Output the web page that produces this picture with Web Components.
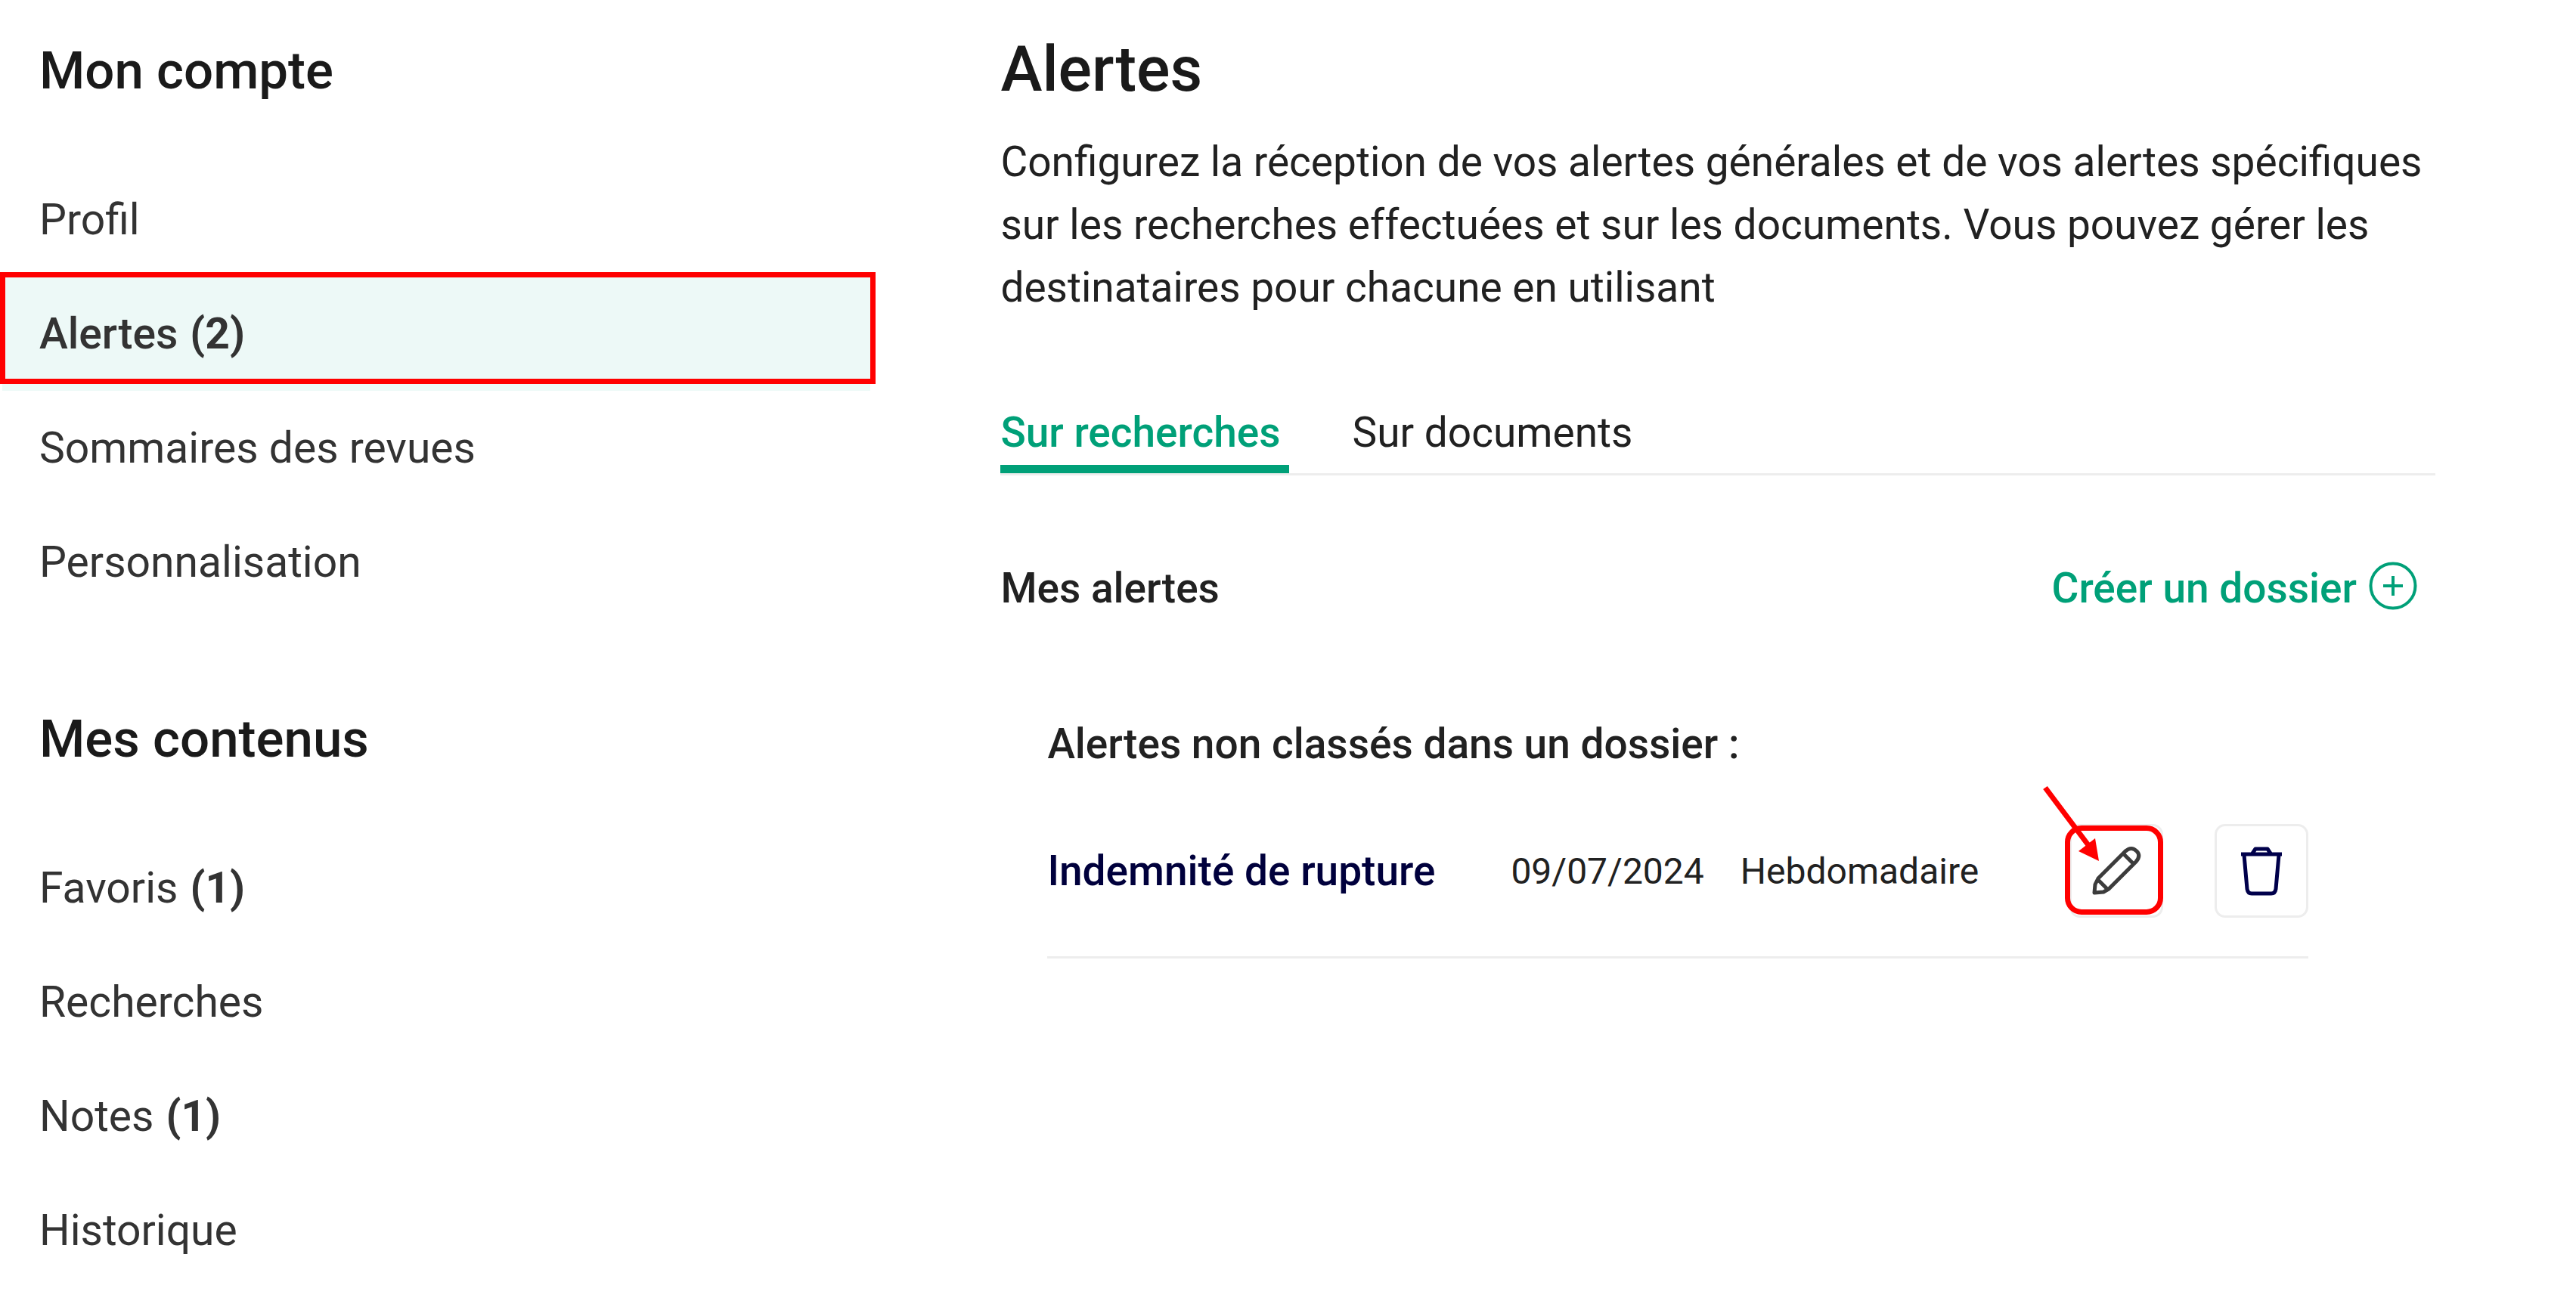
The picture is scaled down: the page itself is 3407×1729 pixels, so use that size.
<!DOCTYPE html>
<html lang="fr">
<head>
<meta charset="utf-8">
<title>Mon compte – Alertes</title>
<style>
  body { margin: 0; background: #fff; font-family: Roboto, "Liberation Sans", sans-serif; font-size: 55px; line-height: 83px; color: #212121; }
</style>
</head>
<body>
<account-page></account-page>
<script>
const define = (name, html, setup) => {
  const tpl = document.createElement('template');
  tpl.innerHTML = html;
  customElements.define(name, class extends HTMLElement {
    connectedCallback() {
      if (this.shadowRoot) return;
      this.attachShadow({ mode: 'open' }).append(tpl.content.cloneNode(true));
      if (setup) setup(this, this.shadowRoot);
    }
  });
};

define('call-out', `
  <style>
    :host { position: absolute; box-sizing: border-box; border: 7px solid #f00; pointer-events: none; }
  </style>`);

define('call-out-arrow', `
  <style>
    :host { position: absolute; width: 80px; height: 104px; pointer-events: none; }
    svg { display: block; width: 100%; height: 100%; }
  </style>
  <svg viewBox="0 0 80 104" aria-hidden="true">
    <path d="M5 3 62 79" stroke="#f00" stroke-width="7" fill="none"/>
    <path d="M76 100 49 87 71 70z" fill="#f00"/>
  </svg>`);

define('nav-item', `
  <style>
    :host { display: block; position: relative; margin: 0 7px 0 3px; }
    a { display: flex; gap: 16px; align-items: center; height: 151px; box-sizing: border-box; padding: 0 49px; font-size: 57px; color: #333; text-decoration: none; }
    b { font-weight: 700; }
    b:empty { display: none; }
    :host([active]) a { background: #edf9f7; font-weight: 500; }
  </style>
  <a href="#"><span><slot></slot></span><b></b></a>
  <slot name="mark"></slot>`,
  (host, root) => {
    const n = host.getAttribute('count');
    if (n) root.querySelector('b').textContent = '(' + n + ')';
    if (host.hasAttribute('active')) root.querySelector('a').setAttribute('aria-current', 'page');
  });

define('nav-section', `
  <style>
    :host { display: block; }
    h2 { margin: 0; padding: 52px 52px 80px; font-size: 69px; line-height: 83px; font-weight: 500; color: #1a1a1a; }
    nav { padding-bottom: 65px; }
  </style>
  <h2></h2>
  <nav><slot></slot></nav>`,
  (host, root) => {
    const heading = host.getAttribute('heading');
    root.querySelector('h2').textContent = heading;
    root.querySelector('nav').setAttribute('aria-label', heading);
  });

define('alert-tabs', `
  <style>
    :host { display: flex; gap: 83px; border-bottom: 3px solid #ededed; }
    button { all: unset; cursor: pointer; font: inherit; height: 97px; box-sizing: border-box; white-space: nowrap; border-bottom: 11px solid transparent; }
    button[aria-selected=true] { color: #00a078; font-weight: 500; border-bottom-color: #00a078; padding-right: 12px; }
  </style>
  <button role="tab" aria-selected="true">Sur recherches</button>
  <button role="tab" aria-selected="false">Sur documents</button>`,
  (host) => host.setAttribute('role', 'tablist'));

define('icon-button', `
  <style>
    :host { display: block; position: relative; }
    button { display: flex; align-items: center; justify-content: center; width: 124px; height: 124px; padding: 0; background: #fff; border: 3px solid #ededed; border-radius: 14px; color: inherit; }
  </style>
  <button type="button"><slot></slot></button>
  <slot name="mark"></slot>`,
  (host, root) => root.querySelector('button').setAttribute('aria-label', host.getAttribute('label')));

define('alert-row', `
  <style>
    :host { display: flex; align-items: center; border-bottom: 3px solid #ededed; padding-bottom: 51px; }
    a { color: #00003c; font-weight: 500; text-decoration: none; white-space: nowrap; }
    .meta { display: flex; gap: 48px; margin-left: 100px; font-size: 48px; }
    .actions { display: flex; gap: 68px; margin-left: auto; }
    svg { display: block; width: 68px; height: 68px; fill: none; stroke: currentColor; stroke-width: 5; stroke-linejoin: round; }
    .edit { color: #3c3c3c; }
    .del { color: #00004b; }
    call-out { left: -6px; top: 2px; width: 130px; height: 118px; border-radius: 22px; }
    call-out-arrow { left: -37px; top: -51px; }
  </style>
  <a href="#"><slot></slot></a>
  <div class="meta"><slot name="date"></slot><slot name="frequency"></slot></div>
  <div class="actions">
    <icon-button class="edit" label="Modifier">
      <svg viewBox="0 0 68 68"><path d="M5 63 6 52 10 44 46 8Q54 1 61 8 67 14 60 22L24 58 17 62zM43 11 56 24M10 46 22 58"/></svg>
      <call-out slot="mark"></call-out>
      <call-out-arrow slot="mark"></call-out-arrow>
    </icon-button>
    <icon-button class="del" label="Supprimer">
      <svg viewBox="0 0 68 68"><path d="M7 12H61M11 13 15 58Q16 64 21 64H47Q52 64 53 58L57 13M22 11 26 5H42L46 11"/></svg>
    </icon-button>
  </div>`);

define('alert-panel', `
  <style>
    :host { display: block; }
    h1 { margin: 0; font-size: 83px; line-height: 96px; font-weight: 500; color: #1a1a1a; }
    p { margin: 33px 0 107px; }
    .bar { display: flex; justify-content: space-between; align-items: center; margin-top: 108px; padding-right: 24px; }
    h2, h3 { margin: 0; font-size: 55px; line-height: 83px; font-weight: 500; }
    button { all: unset; cursor: pointer; display: flex; align-items: center; gap: 16px; font: inherit; font-weight: 500; color: #00a078; }
    button svg { width: 64px; height: 64px; fill: none; stroke: currentColor; stroke-width: 4; display: block; margin-bottom: 8px; }
    .folder { margin: 123px 168px 0 62px; }
    h3 { margin-bottom: 64px; }
  </style>
  <h1>Alertes</h1>
  <p>Configurez la réception de vos alertes générales et de vos alertes spécifiques sur les recherches effectuées et sur les documents. Vous pouvez gérer les destinataires pour chacune en utilisant</p>
  <alert-tabs></alert-tabs>
  <div class="bar">
    <h2>Mes alertes</h2>
    <button type="button">Créer un dossier<svg viewBox="0 0 64 64" aria-hidden="true"><circle cx="32" cy="32" r="29.500"/><path d="M32 19V45M19 32H45"/></svg></button>
  </div>
  <div class="folder">
    <h3>Alertes non classés dans un dossier :</h3>
    <alert-row>Indemnité de rupture<span slot="date">09/07/2024</span><span slot="frequency">Hebdomadaire</span></alert-row>
  </div>`);

define('account-page', `
  <style>
    :host { display: grid; grid-template-columns: 34% 1fr; }
    main { padding: 44px 186px 0 165px; min-width: 0; }
    call-out { inset: -6px -7px 9px -3px; }
  </style>
  <aside>
    <nav-section heading="Mon compte">
      <nav-item>Profil</nav-item>
      <nav-item active count="2">Alertes<call-out slot="mark"></call-out></nav-item>
      <nav-item>Sommaires des revues</nav-item>
      <nav-item>Personnalisation</nav-item>
    </nav-section>
    <nav-section heading="Mes contenus">
      <nav-item count="1">Favoris</nav-item>
      <nav-item>Recherches</nav-item>
      <nav-item count="1">Notes</nav-item>
      <nav-item>Historique</nav-item>
    </nav-section>
  </aside>
  <main><alert-panel></alert-panel></main>`);
</script>
</body>
</html>
